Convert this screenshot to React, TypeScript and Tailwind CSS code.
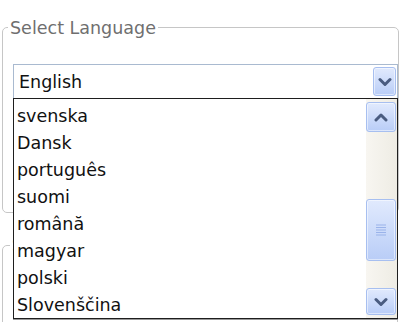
import React from "react";

const languages = ["svenska", "Dansk", "português", "suomi", "română", "magyar", "polski", "Slovenščina"];

function Chevron({ up = false }: { up?: boolean }) {
  return (
    <svg width="14" height="10" viewBox="0 0 14 10">
      <path
        d={up ? "M2 8 L7 3 L12 8" : "M2 2.5 L7 7.5 L12 2.5"}
        fill="none"
        stroke="#4a5c80"
        strokeWidth="3"
        strokeLinecap="round"
        strokeLinejoin="round"
      />
    </svg>
  );
}

function BlueButton({ className, children }: { className: string; children?: React.ReactNode }) {
  return (
    <div
      className={`flex items-center justify-center rounded-[3px] border border-[#a7bff0] bg-gradient-to-b from-[#e1eafd] to-[#b9cdf7] shadow-[inset_0_0_0_1px_rgba(255,255,255,0.5)] ${className}`}
    >
      {children}
    </div>
  );
}

export default function App() {
  return (
    <div className="relative w-[400px] h-[322px] overflow-hidden bg-white font-['DejaVu_Sans',sans-serif] text-[17.5px]">
      <fieldset className="mx-[2px] mt-[13px] h-[200px] rounded-[5px] border border-[#c6c6c6] pl-[10px] pr-0">
        <legend className="-ml-[5px] px-[2px] pt-[2px] leading-[26px] text-[#6f6f6f]">Select Language</legend>
        <div className="mt-[23px] flex h-[35px] w-[385px] items-center border border-[#a9bad0] pl-[5px] pr-[1px]">
          <span className="flex-1 pt-[2px] text-[#111]">English</span>
          <BlueButton className="h-[29px] w-[23px]">
            <Chevron />
          </BlueButton>
        </div>
      </fieldset>

      <fieldset className="mx-[2px] mt-[19px] h-[120px] rounded-[5px] border border-[#c6c6c6] pl-[10px]">
        <legend className="-ml-[3px] px-[2px] leading-[26px] text-[#6f6f6f]">S</legend>
      </fieldset>

      {/* open dropdown list */}
      <div className="absolute left-[13px] top-[98px] flex h-[221px] w-[385px] border border-[#1e1e1e] bg-white shadow-[0_1px_0_#999]">
        <ul className="flex-1 pt-[4px]">
          {languages.map(lang => (
            <li key={lang} className="flex h-[27px] items-center pl-[3px] text-[#111]">
              {lang}
            </li>
          ))}
        </ul>
        <div className="flex w-[31px] flex-col bg-gradient-to-r from-[#f8f6f1] to-[#eeece4] py-[3px]">
          <BlueButton className="h-[30px] w-[30px]">
            <Chevron up />
          </BlueButton>
          <div className="flex-1 pt-[67px]">
            <BlueButton className="h-[62px] w-[30px]">
              <svg width="10" height="12" viewBox="0 0 10 12">
                {[1, 3.5, 6, 8.5, 11].map(y => (
                  <line key={y} x1="0" x2="10" y1={y} y2={y} stroke="#9ab3ea" strokeWidth="1" />
                ))}
              </svg>
            </BlueButton>
          </div>
          <BlueButton className="h-[27px] w-[30px]">
            <Chevron />
          </BlueButton>
        </div>
      </div>
    </div>
  );
}
